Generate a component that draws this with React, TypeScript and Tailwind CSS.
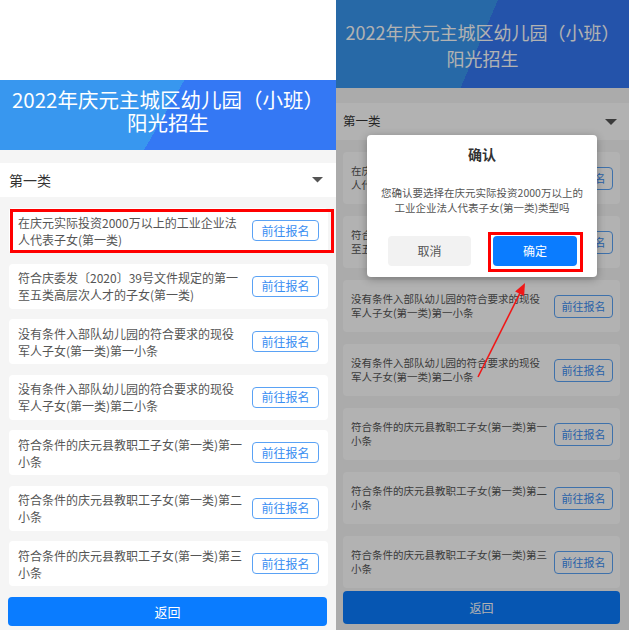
const font = "font-['Noto_Sans_CJK_SC','Noto_Sans',sans-serif]";

const items = [
  ["在庆元实际投资2000万以上的工业企业法", "人代表子女(第一类)"],
  ["符合庆委发〔2020〕39号文件规定的第一", "至五类高层次人才的子女(第一类)"],
  ["没有条件入部队幼儿园的符合要求的现役", "军人子女(第一类)第一小条"],
  ["没有条件入部队幼儿园的符合要求的现役", "军人子女(第一类)第二小条"],
  ["符合条件的庆元县教职工子女(第一类)第一", "小条"],
  ["符合条件的庆元县教职工子女(第一类)第二", "小条"],
  ["符合条件的庆元县教职工子女(第一类)第三", "小条"],
];

function Caret({ w }: { w: number }) {
  return (
    <svg width={w} height={w / 2} viewBox="0 0 12 6">
      <polygon points="0,0 12,0 6,6" fill="#555" />
    </svg>
  );
}

function LeftScreen() {
  return (
    <div className="w-[336px] h-[630px] bg-[#f5f5f5] flex flex-col shrink-0">
      <div className="h-[80px] bg-white" />
      <div className="h-[70px] pt-[8px] text-center text-white text-[20.5px] leading-[23px] whitespace-nowrap bg-[linear-gradient(120deg,#3897ef_49%,#3478f4_49%)]">
        2022年庆元主城区幼儿园（小班）
        <br />
        阳光招生
      </div>
      <div className="mt-[13px] h-[34px] bg-white flex items-center justify-between pl-[9px] pr-[13px] text-[14px] text-[#333]">
        <span>第一类</span>
        <Caret w={11} />
      </div>
      <div className="mt-[11px] flex flex-col gap-[10.5px] pl-[9px] pr-[8px]">
        {items.map((it, i) => (
          <div
            key={i}
            className="relative h-[45px] bg-white rounded-[4px] flex items-center justify-between px-[9px]"
          >
            <div className="text-[12px] leading-[17px] text-[#555] whitespace-nowrap">
              {it[0]}
              <br />
              {it[1]}
            </div>
            <button className="w-[67px] h-[21px] border border-[#5aa2f5] rounded-[4px] text-[12px] leading-none text-[#3a8ef2] bg-white">
              前往报名
            </button>
            {i === 0 && (
              <div className="absolute left-[1px] top-[1px] -right-[6px] bottom-0 border-[3px] border-[#ff0000]" />
            )}
          </div>
        ))}
      </div>
      <button className="mt-[11px] ml-[8px] mr-[9px] h-[29px] rounded-[4px] bg-[#0a7cff] text-white text-[13px]">
        返回
      </button>
    </div>
  );
}

function RightScreen() {
  return (
    <div className="relative w-[293px] h-[630px] bg-[#f5f5f5] flex flex-col overflow-hidden shrink-0">
      <div className="h-[88px] pt-[19px] text-center text-white text-[18px] leading-[26px] whitespace-nowrap bg-[linear-gradient(113deg,#3897ef_49%,#3478f4_49%)]">
        2022年庆元主城区幼儿园（小班）
        <br />
        阳光招生
      </div>
      <div className="mt-[15px] h-[37px] bg-white flex items-center justify-between pl-[7px] pr-[12px] text-[12.5px] text-[#333]">
        <span>第一类</span>
        <Caret w={12} />
      </div>
      <div className="mt-[12px] flex flex-col gap-[12px] pl-[7px] pr-[9px]">
        {items.map((it, i) => (
          <div
            key={i}
            className="h-[52px] bg-white rounded-[4px] flex items-center justify-between pl-[8px] pr-[7px]"
          >
            <div className="text-[10.5px] leading-[14px] text-[#555] whitespace-nowrap">
              {it[0]}
              <br />
              {it[1]}
            </div>
            <button className="w-[59px] h-[23px] border border-[#5aa2f5] rounded-[4px] text-[11px] leading-none text-[#3a8ef2] bg-white">
              前往报名
            </button>
          </div>
        ))}
      </div>
      <button className="mt-[3px] ml-[7px] mr-[9px] h-[33px] rounded-[4px] bg-[#0a7cff] text-white text-[12px]">
        返回
      </button>

      <div className="absolute inset-0 bg-black/30" />

      <div className="absolute left-[31px] top-[135px] w-[230px] h-[142px] bg-white rounded-[4px] shadow-[0_2px_8px_rgba(0,0,0,0.3)] flex flex-col items-center pt-[10px]">
        <div className="text-[14px] leading-[18px] font-bold text-[#333]">确认</div>
        <div className="mt-[22px] text-[10.5px] leading-[15px] text-[#555] text-center whitespace-nowrap">
          您确认要选择在庆元实际投资2000万以上的
          <br />
          工业企业法人代表子女(第一类)类型吗
        </div>
        <div className="mt-[21px] w-full flex justify-between pl-[21px] pr-[20px]">
          <button className="w-[83px] h-[30px] rounded-[4px] bg-[#f2f2f2] text-[12px] text-[#555]">
            取消
          </button>
          <div className="relative">
            <button className="w-[84px] h-[30px] rounded-[4px] bg-[#0a7cff] text-[12px] text-white">
              确定
            </button>
            <div className="absolute -left-[5px] -right-[6px] -top-[4px] -bottom-[6px] border-[3px] border-[#ff0000]" />
          </div>
        </div>
      </div>

      <svg className="absolute inset-0 pointer-events-none" width="293" height="630">
        <line x1="142" y1="377" x2="184" y2="293" stroke="#f01818" strokeWidth="1.6" />
        <polygon points="189,283 188.1,295.9 179.1,291.5" fill="#f01818" />
      </svg>
    </div>
  );
}

export default function App() {
  return (
    <div className={`w-[629px] h-[630px] flex overflow-hidden bg-white ${font}`}>
      <LeftScreen />
      <RightScreen />
    </div>
  );
}
